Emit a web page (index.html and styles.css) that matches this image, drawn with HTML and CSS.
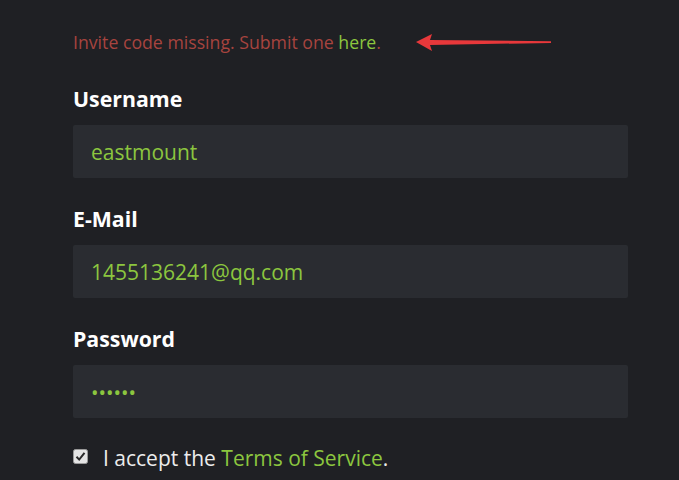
FILE: index.html
```html
<!DOCTYPE html>
<html lang="en">
<head>
<meta charset="utf-8">
<title>Register</title>
<link rel="stylesheet" href="styles.css">
</head>
<body>
<div class="page">
  <p class="notice">Invite code missing. Submit one <a href="#" class="link">here</a>.</p>
  <svg class="arrow" width="140" height="20" viewBox="0 0 140 20" aria-hidden="true">
    <path d="M1 8 L17 0 L15 6 L136 7.3 L136 8.9 L15 11 L17 17 Z" fill="#e8383b"/>
  </svg>
  <div class="field">
    <div class="label">Username</div>
    <div class="input">eastmount</div>
  </div>
  <div class="field">
    <div class="label">E-Mail</div>
    <div class="input">1455136241@qq.com</div>
  </div>
  <div class="field">
    <div class="label">Password</div>
    <div class="input dots">••••••</div>
  </div>
  <div class="terms">
    <span class="check">
      <svg width="15" height="15" viewBox="0 0 15 15" aria-hidden="true">
        <rect x="0.5" y="0.5" width="14" height="14" rx="2" fill="#e4e4e4" stroke="#9a9a9a"/>
        <path d="M3.5 7.8 L6.2 10.6 L11.5 3.8" fill="none" stroke="#2a2a2a" stroke-width="2"/>
      </svg>
    </span>
    <span>I accept the <a href="#" class="link">Terms of Service</a>.</span>
  </div>
</div>
</body>
</html>
```
FILE: styles.css
```css
html, body {
  margin: 0;
  padding: 0;
  background: #1f2024;
  height: 100%;
  overflow: hidden;
}
body {
  font-family: "Open Sans", "Liberation Sans", sans-serif;
}
.page {
  position: relative;
  padding: 30px 51px 0 73px;
}
.notice {
  margin: 0;
  font-size: 17.7px;
  line-height: 24px;
  color: #a7443f;
}
.link {
  color: #8cc63f;
  text-decoration: none;
}
.arrow {
  position: absolute;
  left: 415px;
  top: 34px;
}
.field {
  margin-top: 32px;
}
.field + .field {
  margin-top: 28px;
}
.label {
  font-size: 21.3px;
  font-weight: 700;
  line-height: 26px;
  color: #ffffff;
  margin-bottom: 13px;
}
.input {
  height: 53px;
  box-sizing: border-box;
  background: #2a2c31;
  border-radius: 2px;
  padding-left: 18px;
  display: flex;
  align-items: center;
  font-size: 21px;
  color: #8cc63f;
}
.dots {
  font-size: 20px;
  padding-top: 2px;
}
.terms {
  margin-top: 26px;
  display: flex;
  align-items: center;
  gap: 15px;
  font-size: 21px;
  line-height: 28px;
  color: #ececec;
}
.check {
  display: flex;
  margin-top: -4px;
}
```
